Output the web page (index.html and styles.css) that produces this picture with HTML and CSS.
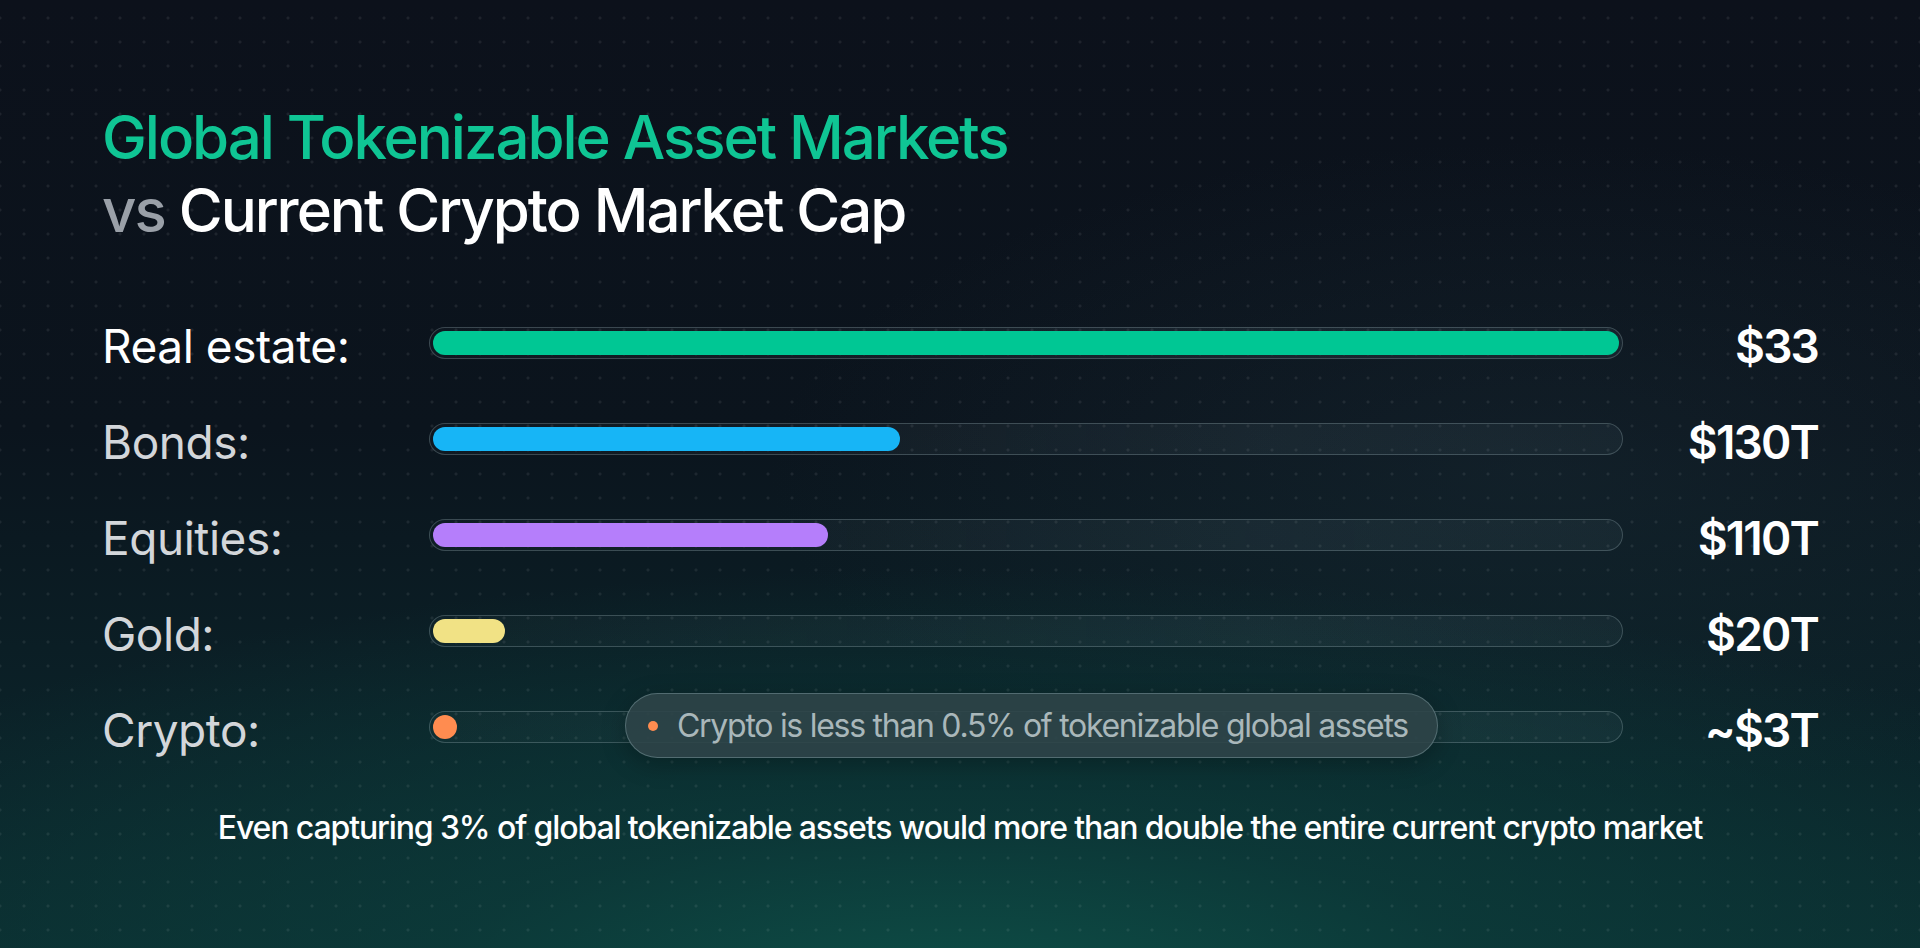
FILE: index.html
```html
<!DOCTYPE html>
<html lang="en">
<head>
<meta charset="utf-8">
<title>Global Tokenizable Asset Markets vs Current Crypto Market Cap</title>
<link rel="stylesheet" href="styles.css">
</head>
<body>
<main class="page">
  <h1 class="title">
    <span class="title-accent">Global Tokenizable Asset Markets</span>
    <span class="title-line"><span class="title-vs">vs</span> Current Crypto Market Cap</span>
  </h1>

  <section class="chart">
    <div class="row">
      <div class="label label-primary">Real estate:</div>
      <div class="track"><div class="fill fill-green" style="width:100%"></div></div>
      <div class="value">$33</div>
    </div>
    <div class="row">
      <div class="label">Bonds:</div>
      <div class="track"><div class="fill fill-blue" style="width:39.4%"></div></div>
      <div class="value">$130T</div>
    </div>
    <div class="row">
      <div class="label">Equities:</div>
      <div class="track"><div class="fill fill-purple" style="width:33.3%"></div></div>
      <div class="value">$110T</div>
    </div>
    <div class="row">
      <div class="label">Gold:</div>
      <div class="track"><div class="fill fill-yellow" style="width:6.06%"></div></div>
      <div class="value">$20T</div>
    </div>
    <div class="row">
      <div class="label">Crypto:</div>
      <div class="track">
        <div class="fill fill-orange" style="width:0.9%"></div>
        <div class="tooltip"><span class="tooltip-dot"></span><span class="tooltip-text">Crypto is less than 0.5% of tokenizable global assets</span></div>
      </div>
      <div class="value">~$3T</div>
    </div>
  </section>

  <p class="footnote">Even capturing 3% of global tokenizable assets would more than double the entire current crypto market</p>
</main>
</body>
</html>
```

FILE: styles.css
```css
html, body {
  margin: 0;
  padding: 0;
}

body {
  width: 1920px;
  height: 948px;
  overflow: hidden;
  font-family: Inter, "Noto Sans", "Liberation Sans", sans-serif;
  color: #ffffff;
  background-color: #0c111b;
  background-image:
    radial-gradient(circle, rgba(255, 255, 255, 0.075) 1.3px, transparent 1.8px),
    radial-gradient(ellipse 70% 45% at 50% 105%, rgba(14, 80, 72, 0.95) 0%, rgba(12, 62, 60, 0.7) 40%, rgba(12, 40, 44, 0) 100%),
    radial-gradient(ellipse 40% 35% at 80% 50%, rgba(30, 50, 60, 0.35) 0%, rgba(30, 50, 60, 0) 100%),
    linear-gradient(180deg, #0c111b 0%, #0b141d 45%, #0b2329 80%, #0b2c2f 100%);
  background-size: 24px 24px, 100% 100%, 100% 100%, 100% 100%;
  background-position: 12px 6px, 0 0, 0 0, 0 0;
}

.page {
  box-sizing: border-box;
  width: 1920px;
  height: 948px;
  padding: 101px 102px 0 102px;
}

.title {
  margin: 0;
  font-size: 60px;
  line-height: 73px;
  font-weight: 500;
  letter-spacing: -0.034em;
}

.title-accent {
  display: block;
  color: #0fc594;
}

.title-line {
  display: block;
  color: #ffffff;
}

.title-vs {
  color: #9aa0a8;
}

.chart {
  margin-top: 48px;
}

.row {
  display: grid;
  grid-template-columns: 327px 1fr 195px;
  align-items: center;
  height: 96px;
}

.label {
  padding-top: 6px;
  font-size: 46px;
  line-height: 56px;
  font-weight: 400;
  letter-spacing: -0.01em;
  color: #d3d6da;
}

.label-primary {
  color: #ffffff;
}

.track {
  position: relative;
  box-sizing: border-box;
  height: 32px;
  padding: 3px;
  border-radius: 16px;
  border: 1px solid rgba(150, 170, 178, 0.32);
  background: linear-gradient(90deg, rgba(255, 255, 255, 0.02) 0%, rgba(120, 150, 160, 0.1) 70%, rgba(120, 150, 160, 0.08) 100%);
}

.fill {
  height: 24px;
  min-width: 24px;
  border-radius: 12px;
}

.fill-green { background: #00c794; }
.fill-blue { background: #17b5f6; }
.fill-purple { background: #b57efb; }
.fill-yellow { background: #f1e285; }
.fill-orange { background: #ff8c50; }

.value {
  padding-top: 6px;
  text-align: right;
  font-size: 46px;
  line-height: 56px;
  font-weight: 600;
  letter-spacing: -0.04em;
  color: #ffffff;
}

.tooltip {
  position: absolute;
  left: 195px;
  top: -19px;
  box-sizing: border-box;
  width: 813px;
  height: 65px;
  display: flex;
  align-items: center;
  gap: 19px;
  padding-left: 22px;
  border-radius: 33px;
  border: 1px solid rgba(160, 190, 195, 0.35);
  background: rgba(46, 68, 72, 0.9);
  box-shadow: 0 6px 24px rgba(0, 0, 0, 0.25);
}

.tooltip-dot {
  flex: 0 0 auto;
  width: 10px;
  height: 10px;
  border-radius: 50%;
  background: #ff8c50;
}

.tooltip-text {
  font-size: 32px;
  line-height: 40px;
  font-weight: 400;
  letter-spacing: -0.04em;
  color: #a9b7ba;
  white-space: nowrap;
}

.footnote {
  margin: 33px 0 0 0;
  text-align: center;
  font-size: 32px;
  line-height: 40px;
  font-weight: 500;
  letter-spacing: -0.035em;
  color: #ffffff;
}
```
